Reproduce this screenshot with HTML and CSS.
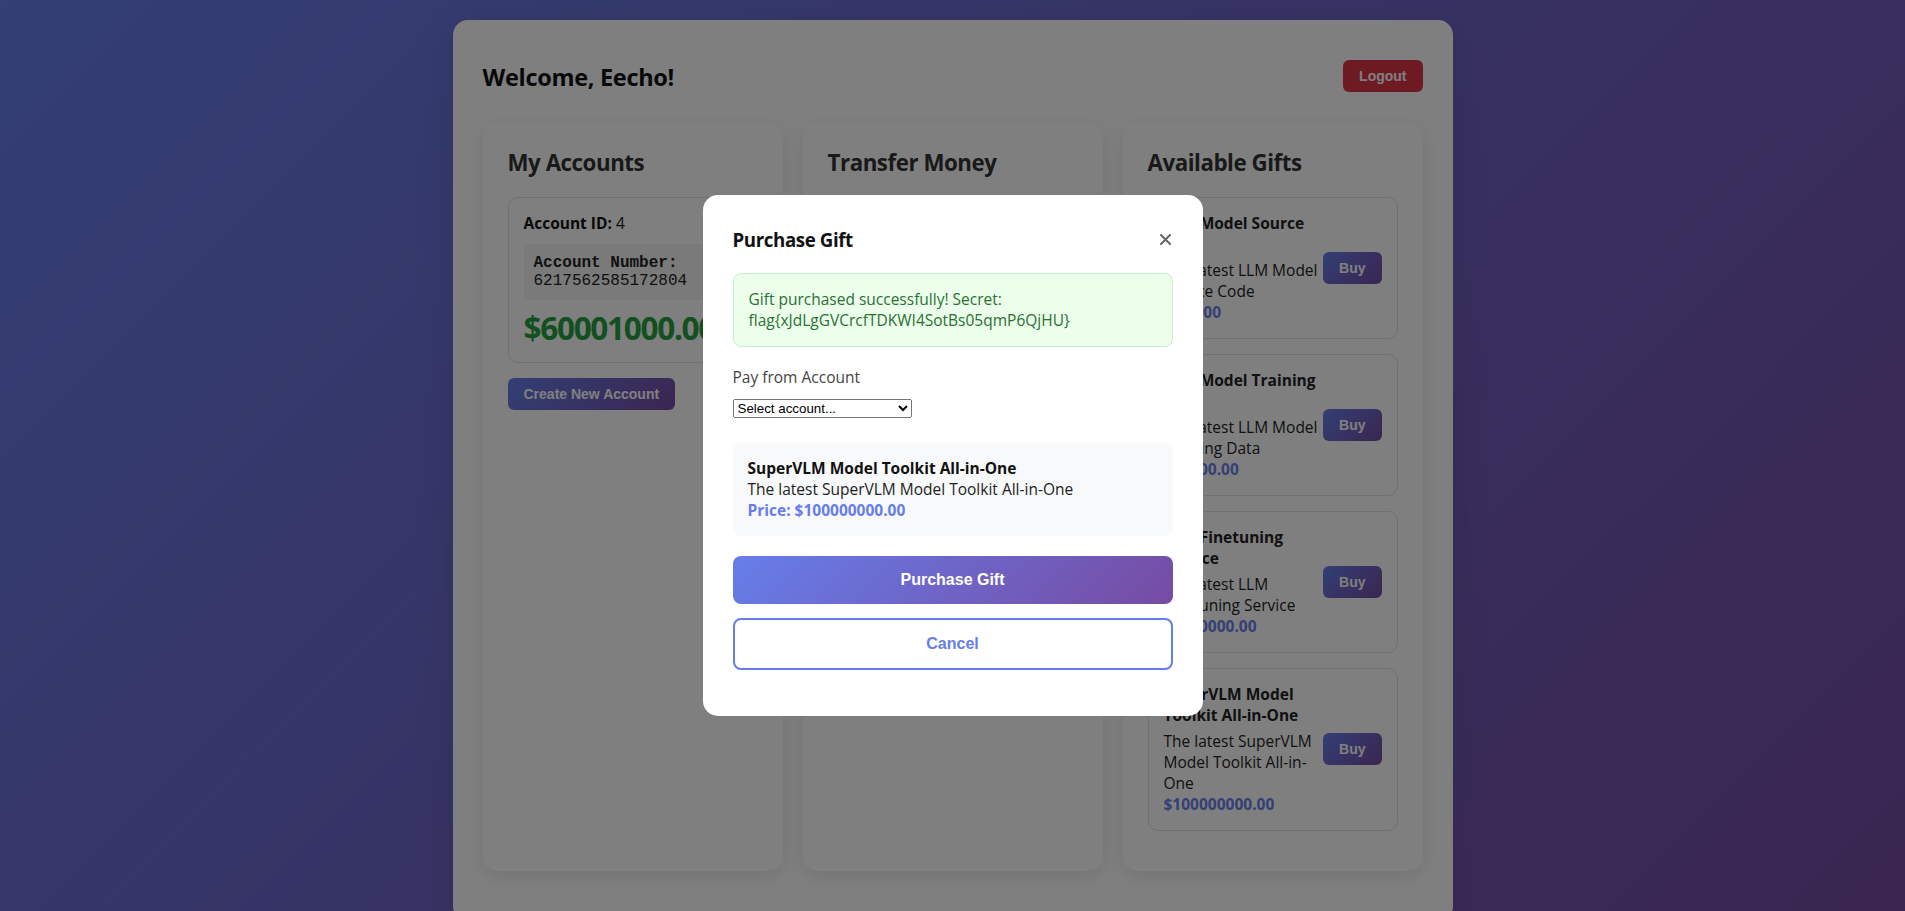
FILE: index.html
```html
<!DOCTYPE html>
<html lang="en">
<head>
<meta charset="utf-8">
<title>Bank Dashboard</title>
<link rel="stylesheet" href="styles.css">
</head>
<body>
<div class="container">
  <header class="header">
    <h1>Welcome, Eecho!</h1>
    <button class="btn btn-danger">Logout</button>
  </header>

  <div class="grid">
    <section class="card">
      <h2>My Accounts</h2>
      <div class="account-item">
        <p class="acc-id"><strong>Account ID:</strong> 4</p>
        <div class="acc-number"><strong>Account Number:</strong><br>6217562585172804</div>
        <div class="balance">$60001000.00</div>
      </div>
      <button class="btn btn-primary">Create New Account</button>
    </section>

    <section class="card">
      <h2>Transfer Money</h2>
      <form class="transfer-form">
        <div class="field">
          <label>From Account</label>
          <select class="input"><option>Select account...</option></select>
        </div>
        <div class="field">
          <label>To Account Number</label>
          <input class="input" type="text" placeholder="Enter account number">
        </div>
        <div class="field">
          <label>Amount</label>
          <input class="input" type="number" placeholder="0.00">
        </div>
        <button type="button" class="btn btn-primary">Transfer</button>
      </form>
    </section>

    <section class="card">
      <h2>Available Gifts</h2>
      <div class="gift-item">
        <div class="gift-info">
          <h4>LLM Model Source Code</h4>
          <p>The latest LLM Model Source Code</p>
          <div class="gift-price">$100.00</div>
        </div>
        <button class="btn btn-primary">Buy</button>
      </div>
      <div class="gift-item">
        <div class="gift-info">
          <h4>LLM Model Training Data</h4>
          <p>The latest LLM Model Training Data</p>
          <div class="gift-price">$10000.00</div>
        </div>
        <button class="btn btn-primary">Buy</button>
      </div>
      <div class="gift-item">
        <div class="gift-info">
          <h4>LLM Finetuning Service</h4>
          <p>The latest LLM Finetuning Service</p>
          <div class="gift-price">$1000000.00</div>
        </div>
        <button class="btn btn-primary">Buy</button>
      </div>
      <div class="gift-item">
        <div class="gift-info">
          <h4>SuperVLM Model Toolkit All-in-One</h4>
          <p>The latest SuperVLM Model Toolkit All-in-One</p>
          <div class="gift-price">$100000000.00</div>
        </div>
        <button class="btn btn-primary">Buy</button>
      </div>
    </section>
  </div>
</div>

<div class="modal-overlay">
  <div class="modal">
    <div class="modal-header">
      <h3>Purchase Gift</h3>
      <button class="modal-close" aria-label="Close">
        <svg width="11" height="11" viewBox="0 0 11 11"><path d="M1 1 L10 10 M10 1 L1 10" stroke="currentColor" stroke-width="2" stroke-linecap="round"/></svg>
      </button>
    </div>
    <div class="alert-success">Gift purchased successfully! Secret: flag{xJdLgGVCrcfTDKWI4SotBs05qmP6QjHU}</div>
    <div class="form-group">
      <label class="form-label">Pay from Account</label>
      <select class="account-select"><option>Select account...</option></select>
    </div>
    <div class="gift-summary">
      <div class="summary-title">SuperVLM Model Toolkit All-in-One</div>
      <div class="summary-desc">The latest SuperVLM Model Toolkit All-in-One</div>
      <div class="summary-price">Price: $100000000.00</div>
    </div>
    <button class="btn-block btn-purchase">Purchase Gift</button>
    <button class="btn-block btn-cancel">Cancel</button>
  </div>
</div>
</body>
</html>
```

FILE: styles.css
```css
html, body {
  height: 100%;
}

body {
  margin: 0;
  overflow: hidden;
  font-family: "Open Sans", "Noto Sans", sans-serif;
  font-size: 15.5px;
  line-height: 21px;
  color: #333;
  background: linear-gradient(135deg, #667eea 0%, #764ba2 100%);
}

.container {
  box-sizing: border-box;
  max-width: 1000px;
  margin: 20px auto;
  padding: 30px;
  background: #fff;
  border-radius: 15px;
  box-shadow: 0 10px 40px rgba(0, 0, 0, 0.1);
}

/* header */
.header {
  display: flex;
  justify-content: space-between;
  align-items: center;
  margin: 10px 0 31px;
}

.header h1 {
  margin: 0;
  padding-top: 2px;
  font-size: 23.5px;
  line-height: 30px;
  letter-spacing: -0.3px;
  font-weight: 700;
  color: #111;
}

.btn {
  border: none;
  border-radius: 6px;
  padding: 8px 16px;
  font-family: "Liberation Sans", Arial, sans-serif;
  font-size: 14px;
  line-height: 16px;
  font-weight: 700;
  color: #fff;
  cursor: pointer;
}

.btn-danger {
  background: #dc3545;
}

.btn-primary {
  background: linear-gradient(135deg, #667eea 0%, #764ba2 100%);
}

/* grid */
.grid {
  display: grid;
  grid-template-columns: repeat(3, 1fr);
  gap: 20px;
  margin-bottom: 20px;
}

.card {
  background: #fff;
  border-radius: 15px;
  padding: 25px;
  box-shadow: 0 5px 20px rgba(0, 0, 0, 0.1);
}

.card h2 {
  margin: 0 0 20px;
  padding-top: 1px;
  font-size: 22.3px;
  line-height: 27.8px;
  letter-spacing: -0.45px;
  font-weight: 700;
  color: #333;
}

/* accounts */
.account-item {
  border: 1px solid #e0e0e0;
  border-radius: 10px;
  padding: 15px;
  margin-bottom: 15px;
}

.acc-id {
  margin: 0;
  color: #111;
}

.acc-number {
  margin-top: 10px;
  padding: 10px;
  background: #f5f5f5;
  border-radius: 5px;
  font-family: "Liberation Mono", "Courier New", monospace;
  font-size: 16px;
  line-height: 18px;
  color: #222;
}

.balance {
  margin-top: 9px;
  font-size: 31.5px;
  line-height: 38.4px;
  letter-spacing: -1.3px;
  font-weight: 700;
  color: #27a03f;
}

/* transfer form */
.field {
  margin-bottom: 15px;
}

.field label {
  display: block;
  margin-bottom: 6px;
  color: #555;
}

.input {
  box-sizing: border-box;
  width: 100%;
  height: 38px;
  padding: 8px 10px;
  border: 1px solid #ddd;
  border-radius: 6px;
  font: inherit;
}

/* gifts */
.gift-item {
  display: flex;
  align-items: center;
  border: 1px solid #e0e0e0;
  border-radius: 10px;
  padding: 15px;
  margin-bottom: 15px;
}

.gift-info {
  flex: 1;
  min-width: 0;
}

.gift-info h4 {
  margin: 0 0 5px;
  font-size: 15.5px;
  line-height: 21px;
  font-weight: 700;
  color: #222;
}

.gift-info p {
  margin: 0;
  color: #222;
}

.gift-price {
  font-weight: 700;
  color: #667eea;
}

.gift-item .btn {
  flex-shrink: 0;
}

/* modal */
.modal-overlay {
  position: fixed;
  inset: 0;
  background: rgba(0, 0, 0, 0.5);
  display: flex;
  align-items: center;
  justify-content: center;
}

.modal {
  box-sizing: border-box;
  width: 500px;
  padding: 30px 30px 46px;
  background: #fff;
  border-radius: 15px;
}

.modal-header {
  display: flex;
  justify-content: space-between;
  align-items: center;
  height: 28px;
  margin-bottom: 20px;
}

.modal-header h3 {
  margin: 0;
  font-size: 18.7px;
  line-height: 27px;
  letter-spacing: -0.4px;
  font-weight: 700;
  color: #111;
}

.modal-close {
  display: flex;
  padding: 0;
  margin-right: 2px;
  border: none;
  background: none;
  color: #666;
  cursor: pointer;
}

.alert-success {
  padding: 15px;
  border: 1px solid #c3f0c8;
  border-radius: 8px;
  background: #ebffeb;
  color: #2b6f35;
  font-weight: 500;
}

.form-group {
  margin-top: 20px;
}

.form-label {
  display: block;
  margin-bottom: 11px;
  color: #444;
}

.account-select {
  display: block;
  box-sizing: border-box;
  width: 179px;
  height: 19px;
  font-family: "Liberation Sans", Arial, sans-serif;
  font-size: 13.333px;
  color: #000;
}

.gift-summary {
  margin-top: 25px;
  padding: 15px;
  border-radius: 8px;
  background: #f8f9fa;
}

.summary-title {
  font-weight: 700;
  color: #111;
}

.summary-desc {
  color: #222;
}

.summary-price {
  font-weight: 700;
  color: #667eea;
}

.btn-block {
  display: block;
  box-sizing: border-box;
  width: 100%;
  padding: 15px;
  border-radius: 8px;
  font-family: "Liberation Sans", Arial, sans-serif;
  font-size: 16px;
  line-height: 18px;
  font-weight: 700;
  cursor: pointer;
}

.btn-purchase {
  margin-top: 20px;
  border: none;
  color: #fff;
  background: linear-gradient(135deg, #667eea 0%, #764ba2 100%);
}

.btn-cancel {
  margin-top: 14px;
  border: 2px solid #667eea;
  color: #667eea;
  background: #fff;
}
```
